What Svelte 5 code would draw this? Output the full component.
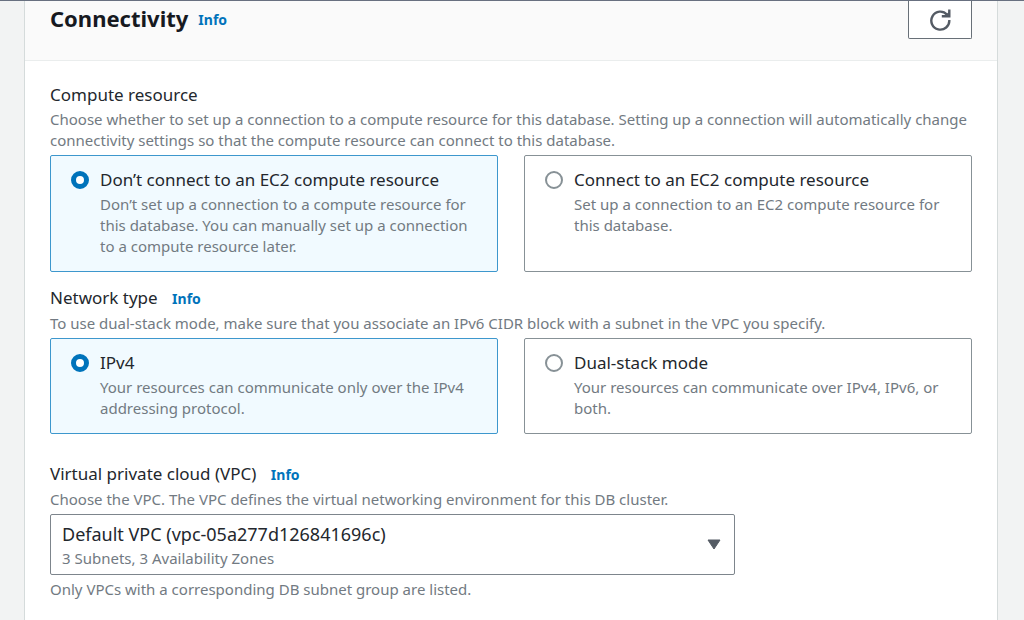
<script>
    let compute = $state("none");
    let network = $state("ipv4");
    let vpc = $state("vpc-05a277d126841696c");

    const compute_options = [
        {
            value: "none",
            title: "Don’t connect to an EC2 compute resource",
            text: "Don’t set up a connection to a compute resource for this database. You can manually set up a connection to a compute resource later.",
        },
        {
            value: "ec2",
            title: "Connect to an EC2 compute resource",
            text: "Set up a connection to an EC2 compute resource for this database.",
        },
    ];

    const network_options = [
        {
            value: "ipv4",
            title: "IPv4",
            text: "Your resources can communicate only over the IPv4 addressing protocol.",
        },
        {
            value: "dual",
            title: "Dual-stack mode",
            text: "Your resources can communicate over IPv4, IPv6, or both.",
        },
    ];
</script>

<main>
    <section class="panel">
        <header>
            <h2>Connectivity</h2>
            <a class="info" href="#info">Info</a>
            <button class="refresh" aria-label="Refresh">
                <svg viewBox="0 0 22 22" width="22" height="22">
                    <path d="M18 5.6A9 9 0 1 0 20.3 11" />
                    <path d="M20.3 .5v6.7h-7.5" />
                    <path class="fill" d="M14.5 7.5L20.5 2.5v5z" />
                </svg>
            </button>
        </header>

        <div class="content">
            <fieldset>
                <legend>Compute resource</legend>
                <p>
                    Choose whether to set up a connection to a compute resource
                    for this database. Setting up a connection will
                    automatically change connectivity settings so that the
                    compute resource can connect to this database.
                </p>
                <div class="tiles">
                    {#each compute_options as option}
                        <label
                            class="tile"
                            class:selected={compute == option.value}
                        >
                            <input
                                type="radio"
                                name="compute"
                                value={option.value}
                                bind:group={compute}
                            />
                            <span class="title">{option.title}</span>
                            <span class="text">{option.text}</span>
                        </label>
                    {/each}
                </div>
            </fieldset>

            <fieldset>
                <legend>
                    Network type <a class="info" href="#network">Info</a>
                </legend>
                <p>
                    To use dual-stack mode, make sure that you associate an IPv6
                    CIDR block with a subnet in the VPC you specify.
                </p>
                <div class="tiles">
                    {#each network_options as option}
                        <label
                            class="tile"
                            class:selected={network == option.value}
                        >
                            <input
                                type="radio"
                                name="network"
                                value={option.value}
                                bind:group={network}
                            />
                            <span class="title">{option.title}</span>
                            <span class="text">{option.text}</span>
                        </label>
                    {/each}
                </div>
            </fieldset>

            <div class="field">
                <div class="heading">
                    <label for="vpc">Virtual private cloud (VPC)</label>
                    <a class="info" href="#vpc-info">Info</a>
                </div>
                <p>
                    Choose the VPC. The VPC defines the virtual networking
                    environment for this DB cluster.
                </p>
                <div class="columns">
                    <div class="select">
                        <select
                            id="vpc"
                            bind:value={vpc}
                            aria-describedby="vpc-detail"
                        >
                            <option value="vpc-05a277d126841696c"
                                >Default VPC (vpc-05a277d126841696c)</option
                            >
                        </select>
                        <span class="detail" id="vpc-detail"
                            >3 Subnets, 3 Availability Zones</span
                        >
                        <svg class="arrow" viewBox="0 0 14 11" width="14" height="11">
                            <path d="M1 1h12L7 10z" />
                        </svg>
                    </div>
                </div>
                <p class="hint">
                    Only VPCs with a corresponding DB subnet group are listed.
                </p>
            </div>
        </div>
    </section>
</main>

<style>
    :global(body) {
        background-color: #f2f3f3;
    }
    main {
        min-height: 100vh;
        box-sizing: border-box;
        display: flex;
        padding: 0 26px 0 24px;
        border-top: 1px solid #687080;
        color: #23272d;
        font-family: "Noto Sans", "Open Sans", sans-serif;
        font-size: 17px;
        line-height: 24px;
    }
    .panel {
        flex: 1;
        background-color: #fff;
        border: 1px solid #d5dbdb;
        border-width: 0 1px;
    }
    header {
        display: flex;
        align-items: flex-start;
        gap: 10px;
        padding: 0 25px 21px;
        background-color: #fafafa;
        border-bottom: 1px solid #eaeded;
    }
    h2 {
        margin: 0;
        padding-top: 3px;
        color: #16191f;
        font-size: 22px;
        line-height: 28px;
        font-weight: 700;
    }
    header .info {
        padding-top: 7px;
    }
    .info {
        color: #0073bb;
        font-size: 14px;
        font-weight: 700;
        text-decoration: none;
    }
    .refresh {
        display: flex;
        align-items: center;
        justify-content: center;
        width: 64px;
        height: 38px;
        margin-left: auto;
        padding: 0;
        background-color: #fff;
        border: 1px solid #687078;
        border-top: 0;
        border-radius: 0 0 2px 2px;
    }
    .refresh path {
        fill: none;
        stroke: #545b64;
        stroke-width: 2.4;
    }
    .refresh .fill {
        fill: #545b64;
        stroke: none;
    }
    .content {
        display: flex;
        flex-direction: column;
        padding: 22px 25px;
    }
    fieldset {
        min-width: 0;
        margin: 0 0 14px;
        padding: 0;
        border: 0;
    }
    legend {
        padding: 0;
    }
    legend .info,
    .heading .info {
        margin-left: 10px;
    }
    .field {
        margin-top: 14px;
    }
    p {
        margin: 2px 0 4px;
        color: #727a82;
        font-size: 15px;
        line-height: 21px;
    }
    .tiles {
        display: grid;
        grid-template-columns: 1fr 1fr;
        gap: 26px;
    }
    .tile {
        display: grid;
        grid-template-columns: 18px 1fr;
        grid-template-rows: auto 1fr;
        gap: 2px 11px;
        padding: 12px 20px 14px;
        border: 1px solid #879196;
        border-radius: 2px;
    }
    .tile.selected {
        background-color: #f1faff;
        border-color: #3d97cd;
    }
    input {
        appearance: none;
        box-sizing: border-box;
        width: 18px;
        height: 18px;
        margin: 0;
        align-self: center;
        background-color: #fff;
        border: 2px solid #879196;
        border-radius: 50%;
    }
    input:checked {
        border: 5px solid #0073bb;
    }
    .text {
        grid-column: 2;
        color: #727a82;
        font-size: 15px;
        line-height: 21px;
    }
    .columns {
        display: grid;
        grid-template-columns: repeat(4, 1fr);
        gap: 26px;
    }
    .select {
        position: relative;
        grid-column: span 3;
    }
    select {
        appearance: none;
        display: block;
        box-sizing: border-box;
        width: 100%;
        height: 61px;
        padding: 0 40px 22px 11px;
        background-color: #fff;
        border: 1px solid #7d858c;
        border-radius: 2px;
        color: inherit;
        font: inherit;
        font-size: 18px;
    }
    .detail {
        position: absolute;
        left: 12px;
        bottom: 6px;
        color: #727a82;
        font-size: 15px;
        line-height: 21px;
        pointer-events: none;
    }
    .arrow {
        position: absolute;
        right: 14px;
        top: 25px;
        pointer-events: none;
    }
    .arrow path {
        fill: #545b64;
        stroke: #545b64;
        stroke-linejoin: round;
    }
    .hint {
        margin-top: 4px;
    }
</style>
